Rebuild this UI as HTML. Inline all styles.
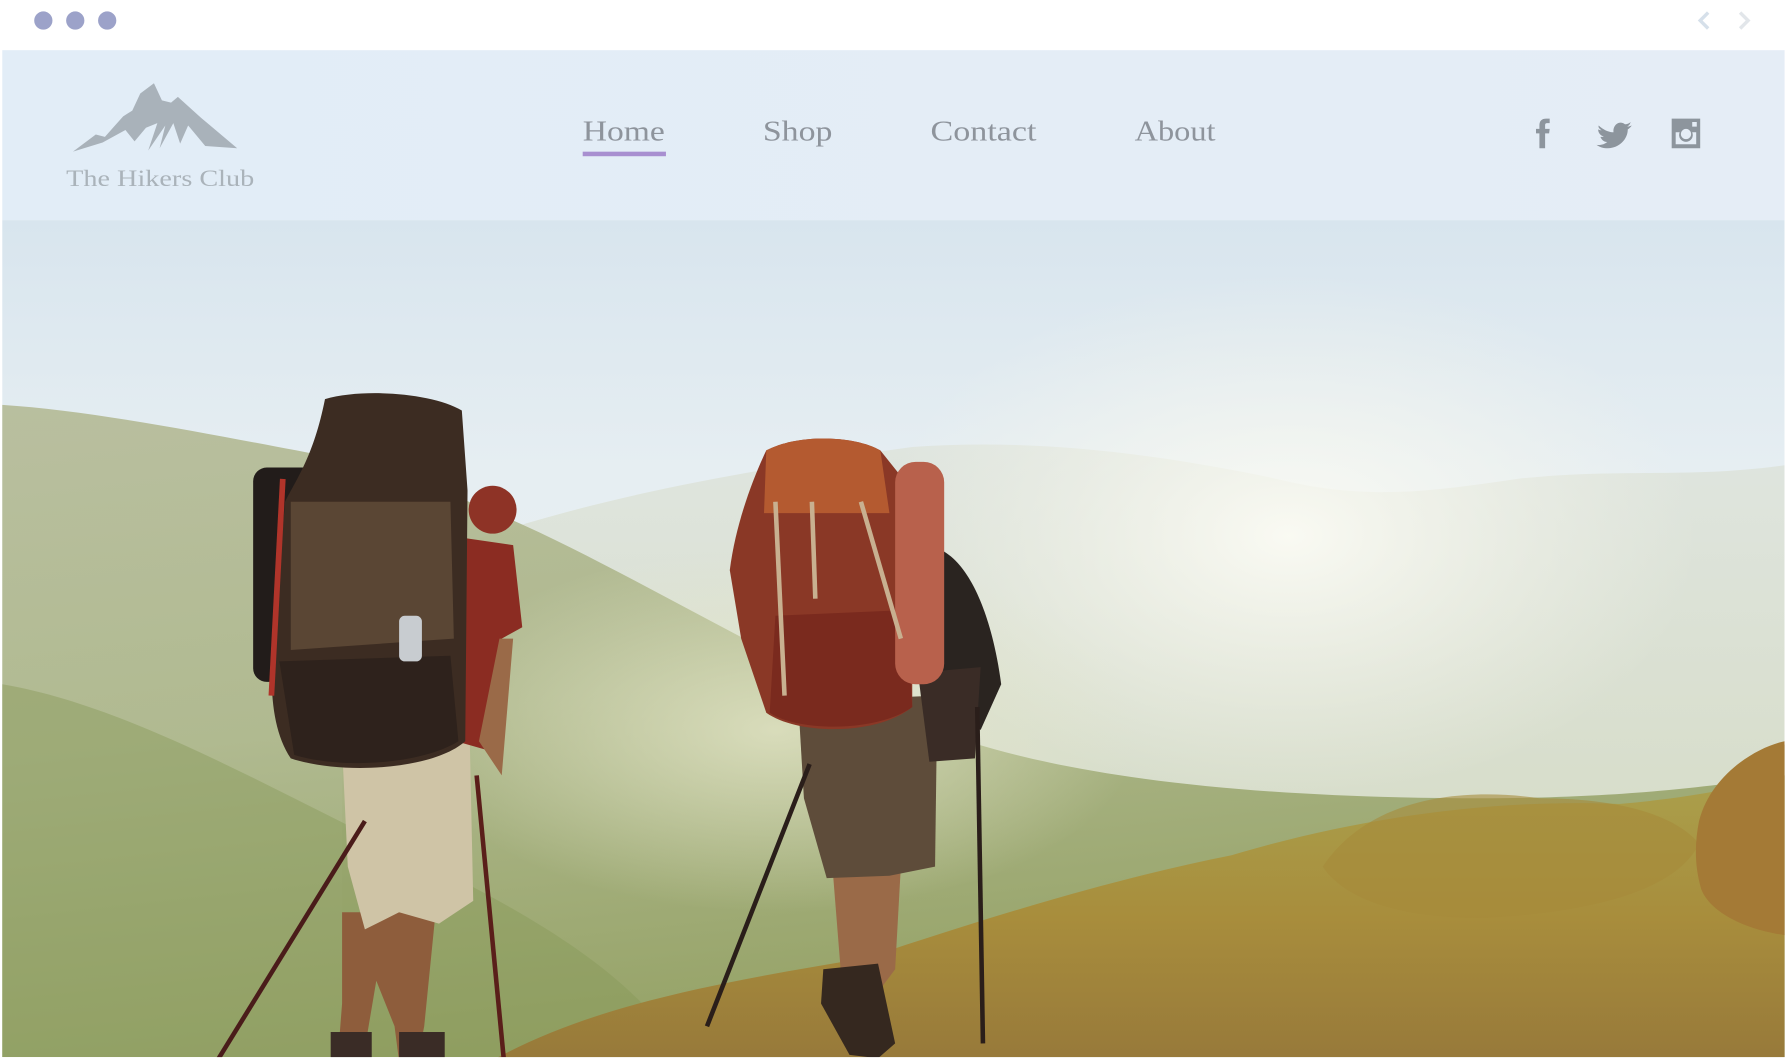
<!DOCTYPE html>
<html><head><meta charset="utf-8"><style>
html,body{margin:0;padding:0;background:#fff;width:1788px;height:1062px;overflow:hidden}
svg{display:block}
</style></head><body>
<svg width="1788" height="1062" viewBox="0 0 1568 931.3" preserveAspectRatio="none" xmlns="http://www.w3.org/2000/svg">
<defs>
<linearGradient id="sky" x1="0" y1="0" x2="0" y2="1"><stop offset="0" stop-color="#d8e5ee"/><stop offset="0.3" stop-color="#e6eef2"/><stop offset="1" stop-color="#eef2ea"/></linearGradient>
<linearGradient id="far" x1="0" y1="0" x2="0" y2="1"><stop offset="0" stop-color="#dfe5df"/><stop offset="1" stop-color="#d2d8bc"/></linearGradient>
<linearGradient id="lh" x1="0" y1="0" x2="0.3" y2="1"><stop offset="0" stop-color="#b4ba96"/><stop offset="0.5" stop-color="#aab486"/><stop offset="1" stop-color="#8e9c5c"/></linearGradient>
<linearGradient id="gr" x1="0" y1="0" x2="0" y2="1"><stop offset="0" stop-color="#aaa04c"/><stop offset="0.5" stop-color="#a88d3c"/><stop offset="1" stop-color="#97793a"/></linearGradient>
<radialGradient id="glow" cx="0.5" cy="0.5" r="0.5"><stop offset="0" stop-color="#fbfbf4" stop-opacity="0.95"/><stop offset="1" stop-color="#f4f4ea" stop-opacity="0"/></radialGradient>
<radialGradient id="haze" cx="0.5" cy="0.5" r="0.5"><stop offset="0" stop-color="#e4e6c8" stop-opacity="0.8"/><stop offset="1" stop-color="#e4e6c8" stop-opacity="0"/></radialGradient>
<linearGradient id="nav" x1="0" y1="0" x2="1" y2="0"><stop offset="0" stop-color="#e2edf7"/><stop offset="1" stop-color="#e5edf6"/></linearGradient>
</defs>
<rect width="1568" height="931.3" fill="#fff"/>
<circle cx="38" cy="18" r="8" fill="#9ca2c9"/><circle cx="66" cy="18" r="8" fill="#9ca2c9"/><circle cx="94" cy="18" r="8" fill="#9ca2c9"/>
<path d="M1498 11 L1491 18 L1498 25" stroke="#d6e0ea" stroke-width="3" fill="none"/>
<path d="M1526 11 L1533 18 L1526 25" stroke="#e2e6ea" stroke-width="3" fill="none"/>
<g>
<rect x="2" y="193" width="1563" height="734" fill="url(#sky)"/>
<path d="M300 520 C450 450 600 420 800 392 C900 385 1000 395 1120 420 C1200 440 1260 430 1330 420 C1420 410 1480 420 1565 408 L1565 927 L300 927Z" fill="url(#far)"/>
<ellipse cx="1130" cy="470" rx="360" ry="230" fill="url(#glow)"/>
<path d="M2 355 C80 360 180 380 260 395 C340 410 420 440 500 480 C600 530 700 590 820 640 C950 690 1150 700 1300 700 C1420 700 1500 690 1565 680 L1565 927 L2 927Z" fill="url(#lh)" opacity="0.9"/>
<ellipse cx="680" cy="640" rx="320" ry="160" fill="url(#haze)"/>
<path d="M2 600 C120 620 250 700 380 760 C480 810 560 860 600 927 L2 927Z" fill="#889a58" opacity="0.45"/>
<path d="M430 931 C520 880 640 860 760 840 C880 800 980 770 1080 750 C1180 720 1300 700 1420 705 C1480 700 1530 690 1565 680 L1565 931Z" fill="url(#gr)"/>
<path d="M1160 760 C1200 700 1280 690 1350 700 C1420 700 1470 715 1490 740 C1470 780 1400 800 1300 805 C1230 805 1180 790 1160 760Z" fill="#a68a3a" opacity="0.6"/>
<path d="M1490 720 C1500 680 1540 655 1565 650 L1565 820 C1530 815 1500 800 1492 780 C1486 760 1486 740 1490 720Z" fill="#a47a36"/>
<path d="M300 800 L382 800 L372 900 L366 931 L350 931 L346 900 L330 860 L318 931 L296 931 L300 880Z" fill="#8e5d3c"/>
<path d="M300 655 L412 650 L415 790 L385 810 L350 800 L320 815 L305 760Z" fill="#cfc4a6"/>
<path d="M395 470 L450 478 L458 550 L440 560 L435 660 L400 650Z" fill="#8b2c22"/>
<path d="M420 650 L438 560 L450 560 L440 680 Z" fill="#9a6a48"/>
<circle cx="432" cy="447" r="21" fill="#8e3326"/>
<rect x="222" y="410" width="66" height="188" rx="12" fill="#221c1a"/>
<path d="M285 350 C320 340 380 345 405 360 L410 430 L408 650 C380 675 300 680 255 665 C238 640 236 600 240 560 L250 440 C260 420 275 400 285 350Z" fill="#3c2c22"/>
<path d="M255 440 L395 440 L398 560 L255 570Z" fill="#5a4634"/>
<path d="M245 580 L395 575 L402 650 C370 670 300 675 258 662Z" fill="#2e221c"/>
<rect x="350" y="540" width="20" height="40" rx="5" fill="#c8ccd0"/>
<line x1="248" y1="420" x2="238" y2="610" stroke="#b0342a" stroke-width="5"/>
<line x1="320" y1="720" x2="190" y2="931" stroke="#4a1c1a" stroke-width="4"/>
<line x1="418" y1="680" x2="442" y2="931" stroke="#5a1e1a" stroke-width="4"/>
<rect x="290" y="905" width="36" height="26" fill="#3a2c26"/><rect x="350" y="905" width="40" height="26" fill="#3a2c26"/>
<path d="M730 760 L790 760 L785 850 L770 870 L738 860Z" fill="#9a6a48"/>
<path d="M722 850 L770 845 L785 915 L770 928 L745 925 L720 880Z" fill="#35281f"/>
<path d="M700 615 L822 610 L820 760 L780 768 L725 770 L705 700Z" fill="#5e4c3a"/>
<path d="M820 480 C850 490 870 540 878 600 L860 640 L815 620Z" fill="#2a2420"/>
<path d="M805 590 L860 585 L855 665 L815 668Z" fill="#3a2c26"/>
<path d="M672 395 C700 380 750 382 772 395 L800 430 L800 620 C770 645 700 645 672 625 L650 560 L640 500 C645 460 660 420 672 395Z" fill="#8a3826"/>
<path d="M672 395 C700 380 750 382 772 395 L780 450 L670 450 Z" fill="#b45a30"/>
<path d="M680 540 L795 535 L800 620 C770 642 700 642 675 625Z" fill="#7a2a1e"/>
<rect x="785" y="405" width="43" height="195" rx="18" fill="#b8614c"/>
<line x1="680" y1="440" x2="688" y2="610" stroke="#c8b090" stroke-width="4"/>
<line x1="712" y1="440" x2="715" y2="525" stroke="#c8b090" stroke-width="4"/>
<line x1="755" y1="440" x2="790" y2="560" stroke="#c8b090" stroke-width="4"/>
<line x1="710" y1="670" x2="620" y2="900" stroke="#2a1e1a" stroke-width="4"/>
<line x1="857" y1="620" x2="862" y2="915" stroke="#2a1e1a" stroke-width="4"/>
</g>
<rect x="0" y="927" width="1568" height="5" fill="#fff"/>
<rect x="1565" y="193" width="3" height="460" fill="#fff"/>
<rect x="2" y="44" width="1563" height="149" fill="url(#nav)"/>
<path d="M64 133 L84 118 L92 120 L108 102 L116 97 L123 82 L135 73 L142 88 L150 90 L156 85 L176 103 L208 130 L180 128 L165 110 L158 126 L152 108 L140 130 L145 110 L130 132 L138 108 L128 112 L118 124 L110 114 L90 125 L80 128Z" fill="#a9b2ba"/>
<text x="58" y="163" font-family="Liberation Serif, serif" font-size="20" fill="#aab3ba" textLength="165" lengthAdjust="spacingAndGlyphs">The Hikers Club</text>
<g font-family="Liberation Serif, serif" font-size="25" fill="#8e949c">
<text x="511" y="123" textLength="72" lengthAdjust="spacingAndGlyphs">Home</text>
<text x="669" y="123" textLength="61" lengthAdjust="spacingAndGlyphs">Shop</text>
<text x="816" y="123" textLength="93" lengthAdjust="spacingAndGlyphs">Contact</text>
<text x="995" y="123" textLength="71" lengthAdjust="spacingAndGlyphs">About</text>
</g>
<rect x="511" y="133" width="73" height="4" fill="#a88fd0"/>
<g fill="#8d959d">
<path d="M1350 130 L1350 117 L1347 117 L1347 113 L1350 113 L1350 110 C1350 106 1352 104 1356 104 L1359 104 L1359 108 L1357 108 C1355.5 108 1355 108.5 1355 110 L1355 113 L1359 113 L1358.5 117 L1355 117 L1355 130Z"/>
<path d="M1402 110 C1406 114 1411 116 1415 116 C1414 110 1420 105 1425 109 C1427 109 1429 108 1430 107 C1429.5 109 1428.5 110 1427 111 C1428.5 111 1429.5 110.5 1431 110 C1430 111.5 1429 112.5 1427.5 113.5 C1427.5 122 1420 130 1410 130 C1406 130 1403 129 1400 127 C1404 127.5 1407 126.5 1409.5 124.5 C1406.5 124.5 1404.5 122.5 1403.5 120 C1404.5 120.2 1405.5 120 1406.5 119.8 C1403.5 119 1401.5 116.5 1401.5 113.5 C1402.5 114 1403.5 114.3 1404.5 114.3 C1402 112.5 1401.5 111.5 1402 110Z"/>
<path d="M1466 104 L1491 104 L1491 130 L1466 130Z M1469.5 116 L1469.5 126.5 L1487.5 126.5 L1487.5 116 L1484 116 A6 6 0 1 1 1473 116Z M1478.5 113 A4.5 4.5 0 1 0 1478.6 113Z M1484 107 L1484 111 L1488 111 L1488 107Z" fill-rule="evenodd"/>
</g>
</svg>
</body></html>
